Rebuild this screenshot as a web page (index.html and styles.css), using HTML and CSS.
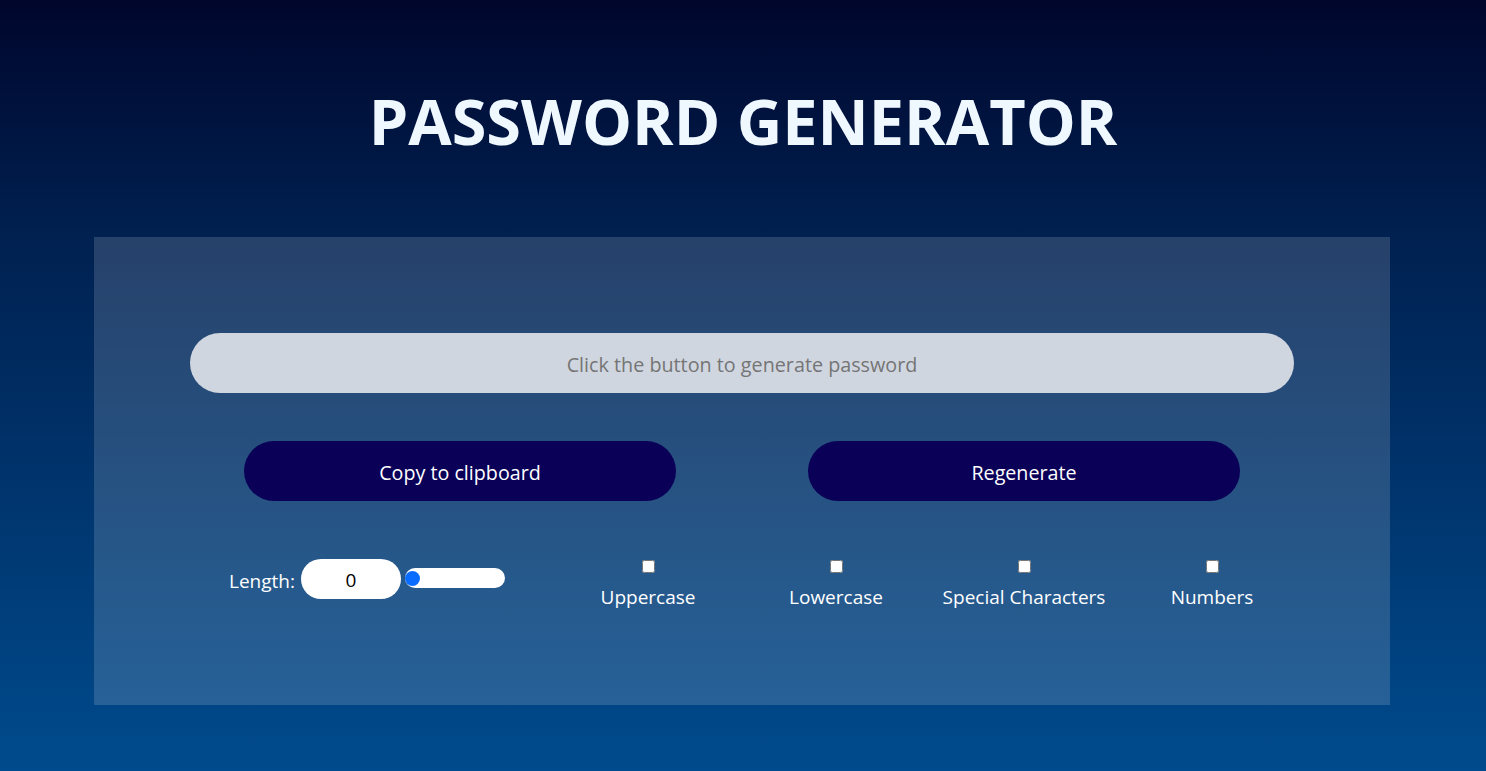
FILE: index.html
```html
<!DOCTYPE html>
<html lang="en">
<head>
<meta charset="utf-8">
<title>Password Generator</title>
<link rel="stylesheet" href="styles.css">
</head>
<body>
  <h1 class="title">PASSWORD GENERATOR</h1>
  <main class="card">
    <input class="output" type="text" placeholder="Click the button to generate password" readonly>
    <div class="actions">
      <button class="btn">Copy to clipboard</button>
      <button class="btn">Regenerate</button>
    </div>
    <div class="options">
      <div class="length">
        <label class="length-label" for="len">Length:</label>
        <input class="length-input" id="len" type="text" value="0">
        <input class="slider" type="range" min="0" max="50" value="0">
      </div>
      <label class="check"><input type="checkbox"><span>Uppercase</span></label>
      <label class="check"><input type="checkbox"><span>Lowercase</span></label>
      <label class="check"><input type="checkbox"><span>Special Characters</span></label>
      <label class="check"><input type="checkbox"><span>Numbers</span></label>
    </div>
  </main>
</body>
</html>
```
FILE: styles.css
```css
html, body {
  margin: 0;
  height: 100%;
}
body {
  background: linear-gradient(180deg, #00062c 0%, #002050 30%, #004b8d 100%);
  font-family: "Open Sans", "Noto Sans", sans-serif;
  color: #fff;
}
.title {
  margin: 0;
  padding-top: 81px;
  line-height: 80px;
  font-size: 63px;
  font-weight: 700;
  text-align: center;
  color: #f0f8ff;
}
.card {
  box-sizing: border-box;
  width: 1296px;
  margin: 76px 0 0 calc(50% - 649px);
  padding: 96px;
  background: rgba(255, 255, 255, 0.15);
  display: flex;
  flex-direction: column;
  gap: 48px;
}
.output {
  box-sizing: border-box;
  width: 100%;
  height: 60px;
  padding-top: 3px;
  border: none;
  border-radius: 30px;
  background: #d0d6e0;
  text-align: center;
  font-family: inherit;
  font-size: 19.75px;
  color: #333;
  outline: none;
}
.output::placeholder {
  color: #757575;
}
.actions {
  display: flex;
  justify-content: space-between;
  padding: 0 54px;
}
.btn {
  width: 432px;
  height: 60px;
  padding-top: 3px;
  border: none;
  border-radius: 30px;
  background: #0a0058;
  color: #fff;
  font-family: inherit;
  font-size: 19.7px;
}
.options {
  display: flex;
  align-items: center;
  height: 60px;
  padding-left: 39px;
}
.length {
  display: flex;
  align-items: center;
  flex-shrink: 0;
  margin-right: 49px;
}
.length-label {
  width: 72px;
  font-size: 19px;
  padding-top: 3px;
}
.length-input {
  box-sizing: border-box;
  width: 100px;
  height: 40px;
  padding-top: 2px;
  border: none;
  border-radius: 20px;
  background: #fff;
  text-align: center;
  font-family: inherit;
  font-size: 19px;
  color: #000;
  outline: none;
}
.slider {
  -webkit-appearance: none;
  appearance: none;
  width: 100px;
  height: 20px;
  margin: -2px 0 0 4px;
  border-radius: 10px;
  background: #fff;
}
.slider::-webkit-slider-thumb {
  -webkit-appearance: none;
  width: 15px;
  height: 15px;
  border-radius: 50%;
  background: #0a6cff;
}
.check {
  flex-shrink: 0;
  align-self: flex-start;
  width: 188px;
  display: flex;
  flex-direction: column;
  align-items: center;
  font-size: 19px;
  margin-top: 11px;
}
.check input {
  margin: 0 0 11px;
  width: 13px;
  height: 13px;
}
```
